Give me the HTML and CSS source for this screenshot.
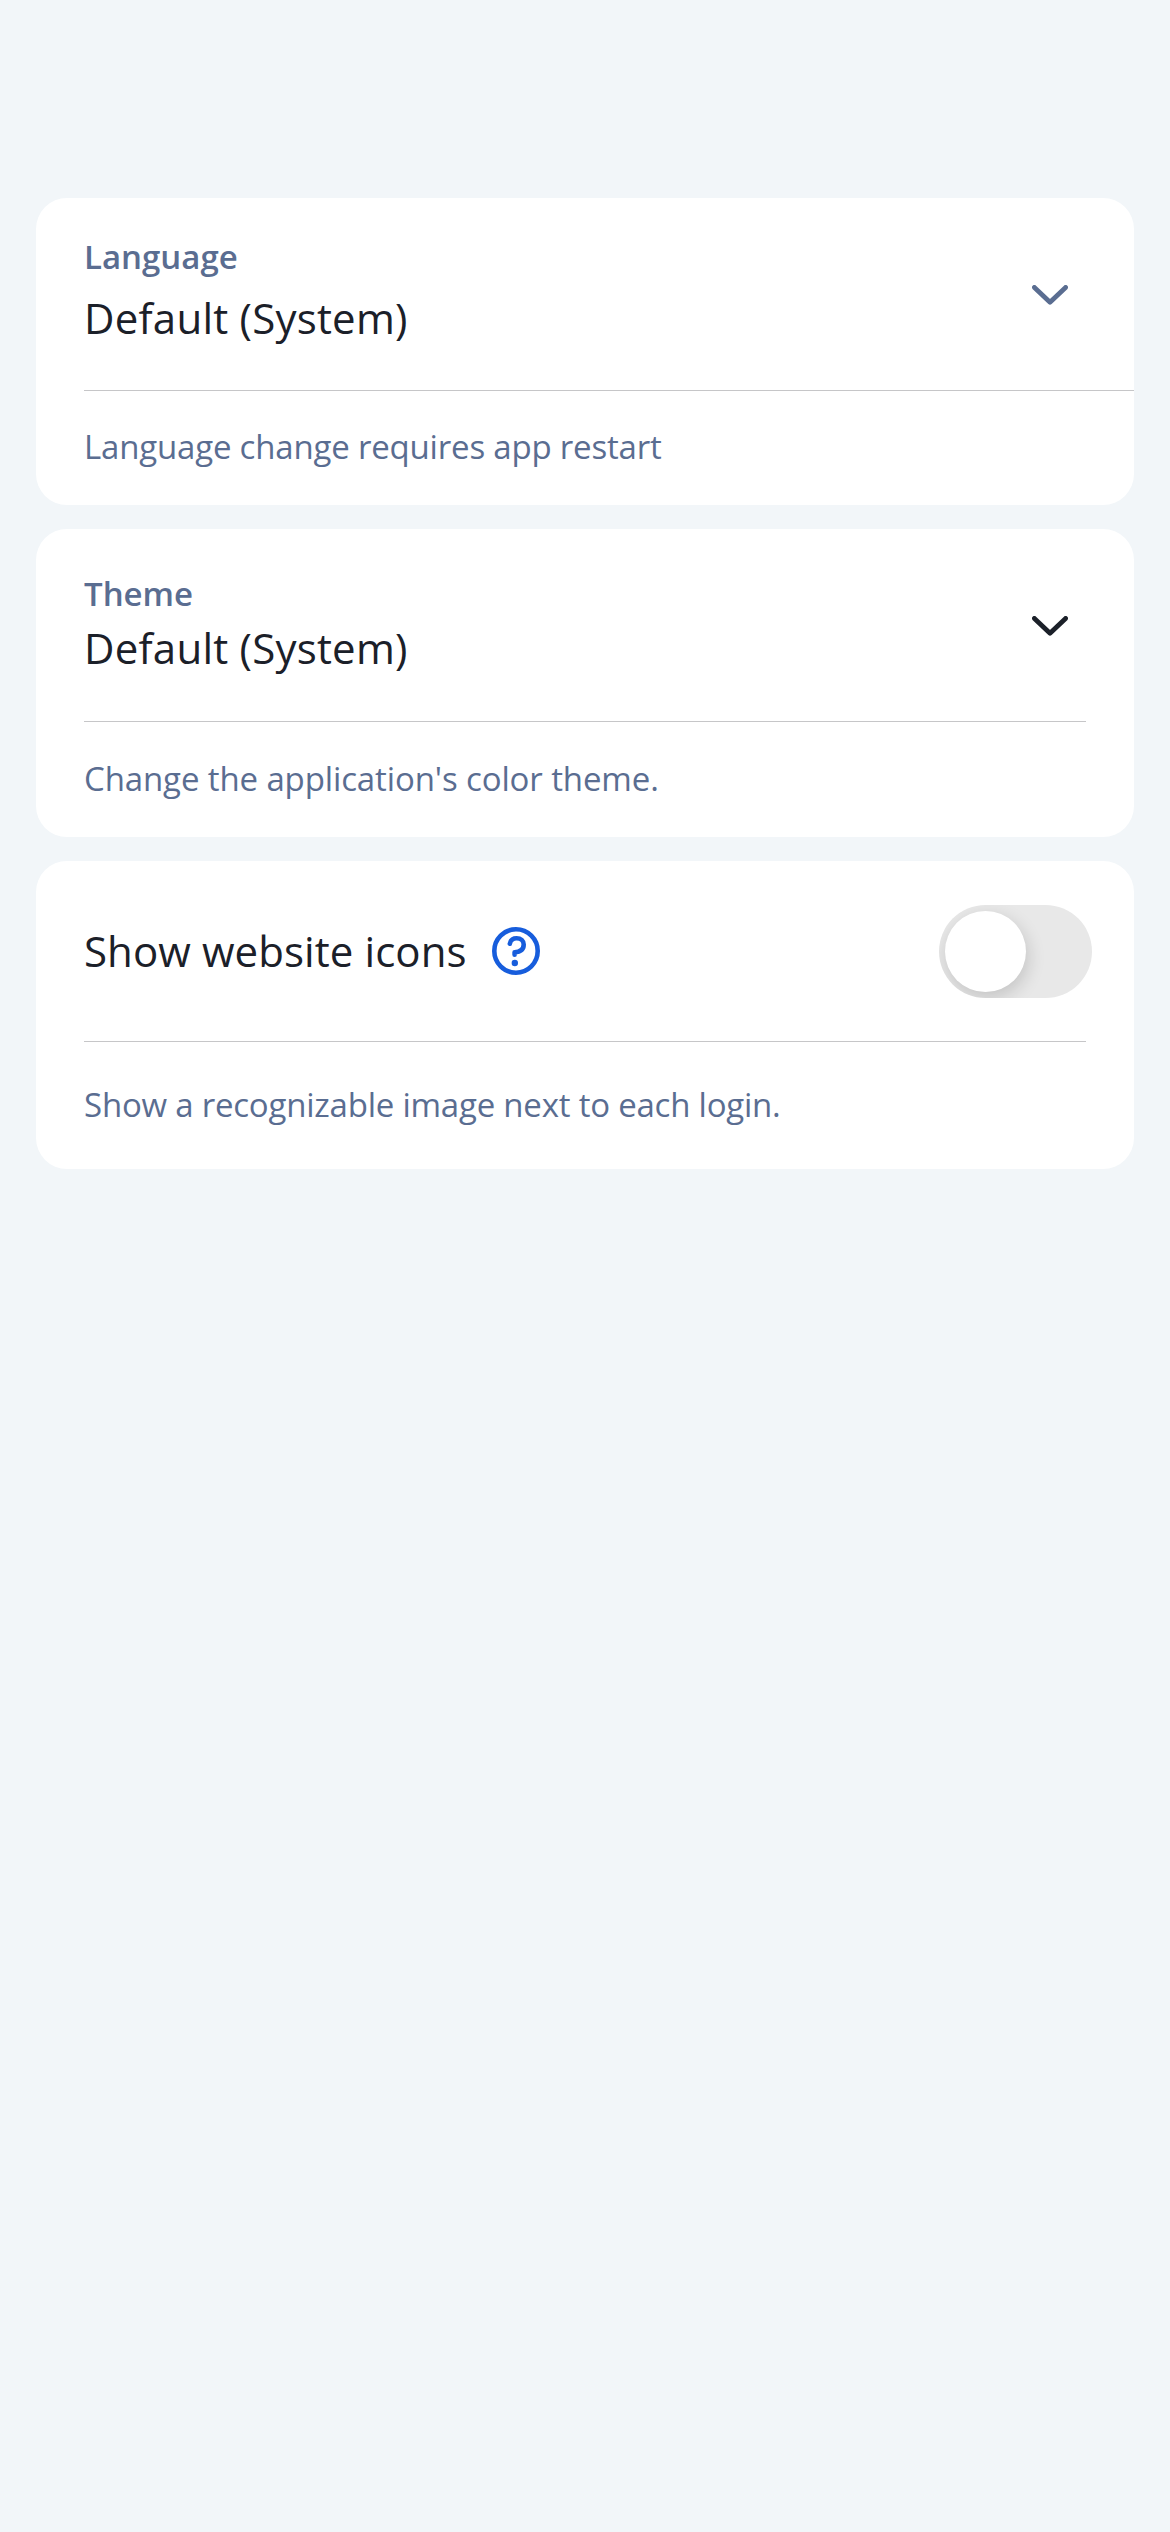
FILE: index.html
```html
<!DOCTYPE html>
<html lang="en">
<head>
<meta charset="utf-8">
<title>Appearance</title>
<link rel="stylesheet" href="styles.css">
</head>
<body>
<main class="settings">
  <section class="card card-language">
    <div class="row">
      <div class="field">
        <span class="label label-language">Language</span>
        <span class="value">Default (System)</span>
      </div>
      <svg class="chevron chevron-muted" viewBox="0 0 36 20"><path d="M2.4 2.4 18 17.2 33.6 2.4"/></svg>
    </div>
    <hr class="divider divider-full">
    <p class="note note-language">Language change requires app restart</p>
  </section>

  <section class="card card-theme">
    <div class="row">
      <div class="field">
        <span class="label label-theme">Theme</span>
        <span class="value">Default (System)</span>
      </div>
      <svg class="chevron" viewBox="0 0 36 20"><path d="M2.4 2.4 18 17.2 33.6 2.4"/></svg>
    </div>
    <hr class="divider">
    <p class="note note-theme">Change the application's color theme.</p>
  </section>

  <section class="card card-icons">
    <div class="row row-toggle">
      <span class="value value-icons">Show website icons</span>
      <svg class="help" viewBox="0 0 48 48">
        <circle class="help-line" cx="24" cy="24" r="21.7"/>
        <path class="help-line help-hook" d="M17.8 16.8C18.4 13.2 21 11.2 24.6 11.2 28.8 11.2 31.7 13.8 31.7 17.6 31.7 22.6 28.4 25 22.6 25.2V27.8"/>
        <circle class="help-dot" cx="22.8" cy="36" r="3.2"/>
      </svg>
      <div class="toggle" role="switch" aria-checked="false"><span class="knob"></span></div>
    </div>
    <hr class="divider">
    <p class="note note-icons">Show a recognizable image next to each login.</p>
  </section>
</main>
</body>
</html>
```
FILE: styles.css
```css
* { box-sizing: border-box; }

body {
  margin: 0;
  background: #f2f6f9;
  font-family: "Open Sans", "Noto Sans", sans-serif;
  color: #1b2029;
}

.settings {
  display: flex;
  flex-direction: column;
  gap: 24px;
  min-height: 2532px;
  padding: 198px 36px 0;
}

.card {
  border-radius: 31px;
  background: #fff;
  overflow: hidden;
}

.card-language { height: 307px; }
.card-theme { height: 308px; }
.card-icons { height: 308px; }

.row {
  display: flex;
  height: 192px;
  justify-content: space-between;
  padding: 0 66px 0 48px;
}

.field {
  display: flex;
  flex-direction: column;
  gap: 13px;
  padding-top: 39px;
}

.card-theme .field {
  gap: 6px;
  padding-top: 45px;
}

.label,
.note {
  font-size: 33px;
  line-height: 40px;
  color: #5a6d91;
  white-space: nowrap;
}

.label { font-weight: 600; }

.value {
  font-size: 42px;
  line-height: 56px;
  letter-spacing: 0.22px;
  white-space: nowrap;
}

.chevron {
  width: 36px;
  height: 20px;
  margin-top: 87px;
  fill: none;
  stroke: #1b2029;
  stroke-width: 4.8;
  stroke-linecap: round;
  stroke-linejoin: round;
}

.chevron-muted { stroke: #5a6d91; }

.divider {
  height: 1px;
  margin: 0 48px;
  border: 0;
  background: #c6c6c8;
}

.divider-full { margin-right: 0; }

.note {
  margin: 0;
  padding: 36px 48px 0;
  letter-spacing: -0.19px;
}

.note-theme {
  padding-top: 37px;
  letter-spacing: -0.12px;
}

.note-icons {
  padding-top: 43px;
  letter-spacing: -0.22px;
}

.row-toggle {
  height: 180px;
  align-items: center;
  justify-content: flex-start;
  padding-right: 42px;
}

.value-icons {
  width: 408px;
  padding-bottom: 1px;
  letter-spacing: 0.08px;
}

.help {
  width: 48px;
  height: 48px;
}

.help-line {
  fill: none;
  stroke: #175ddc;
  stroke-width: 4.6;
}

.help-hook {
  stroke-linecap: round;
  stroke-linejoin: round;
}

.help-dot { fill: #175ddc; }

.toggle {
  width: 153px;
  height: 93px;
  margin-left: auto;
  padding: 6px;
  border-radius: 47px;
  background: #e8e8e8;
  overflow: hidden;
}

.knob {
  display: block;
  width: 81px;
  height: 81px;
  border-radius: 50%;
  background: #fff;
  box-shadow: 2px 6px 18px rgba(0, 0, 0, 0.16);
}
```
